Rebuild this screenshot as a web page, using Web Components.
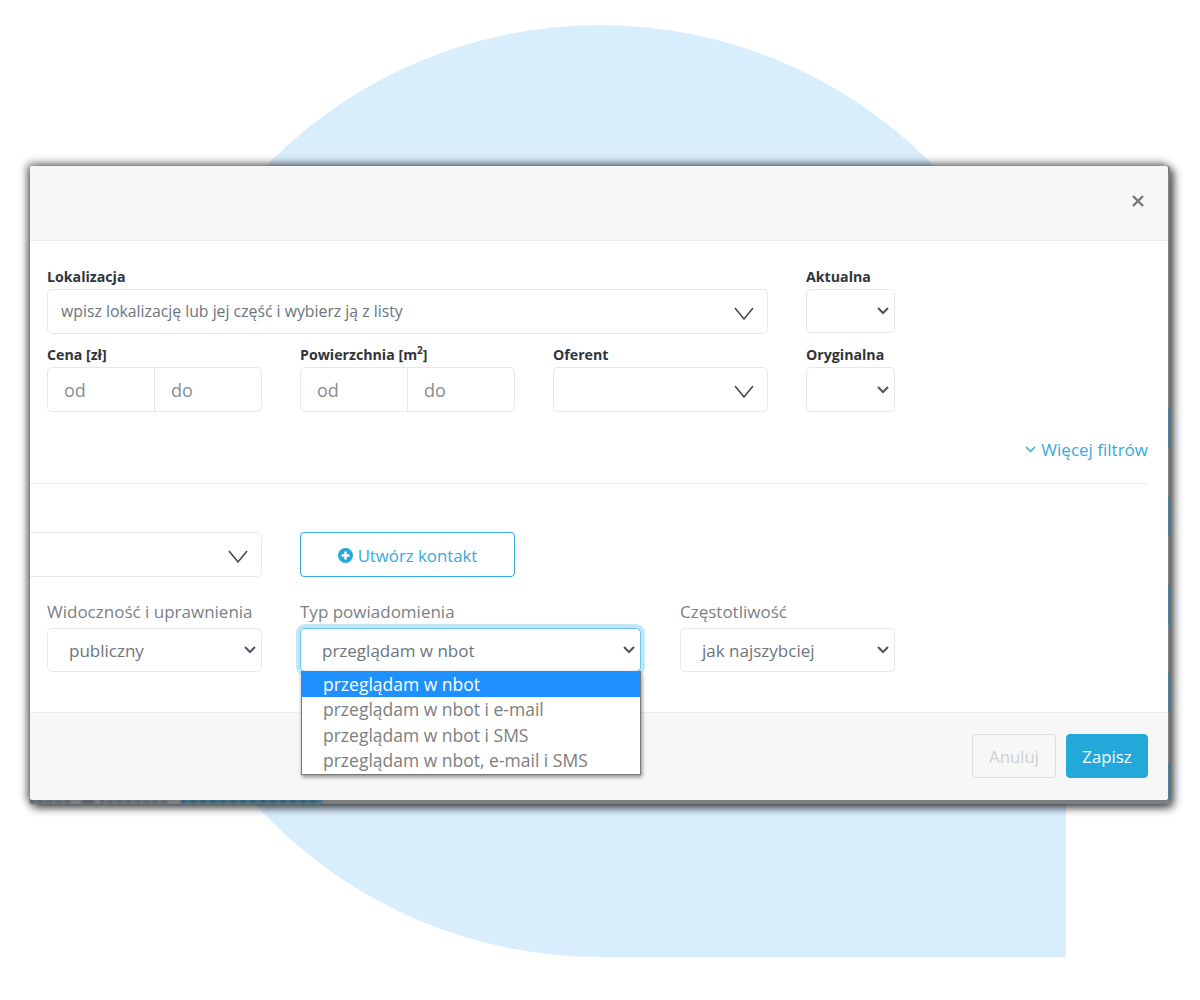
<!DOCTYPE html>
<html lang="pl">
<head>
<meta charset="utf-8">
<title>Filtry</title>
<style>
  body { margin: 0; background: #fff; font-family: "Open Sans", "Liberation Sans", sans-serif; }
</style>
</head>
<body>
<x-stage>
  <x-modal>
    <x-filter-grid>
      <x-field class="wide" label="Lokalizacja" strong>
        <x-select big value="wpisz lokalizację lub jej część i wybierz ją z listy" small-text></x-select>
      </x-field>
      <x-field label="Aktualna" strong><x-select short></x-select></x-field>
      <x-field label="Cena [zł]" strong><x-range></x-range></x-field>
      <x-field strong><span slot="label">Powierzchnia [m<sup style="font-size:10px;line-height:0">2</sup>]</span><x-range></x-range></x-field>
      <x-field label="Oferent" strong><x-select big></x-select></x-field>
      <x-field label="Oryginalna" strong><x-select></x-select></x-field>
    </x-filter-grid>
    <x-more-link>Więcej filtrów</x-more-link>
    <x-notify-form>
      <x-select big class="cut" slot="contact"></x-select>
      <x-add-button slot="contact">Utwórz kontakt</x-add-button>
      <x-field slot="visibility" label="Widoczność i uprawnienia"><x-select short value="publiczny"></x-select></x-field>
      <x-field slot="type" label="Typ powiadomienia">
        <x-select short focused value="przeglądam w nbot"></x-select>
        <x-option-menu>
          <span selected>przeglądam w nbot</span>
          <span>przeglądam w nbot i e-mail</span>
          <span>przeglądam w nbot i SMS</span>
          <span>przeglądam w nbot, e-mail i SMS</span>
        </x-option-menu>
      </x-field>
      <x-field slot="frequency" label="Częstotliwość"><x-select short value="jak najszybciej"></x-select></x-field>
    </x-notify-form>
    <x-action slot="footer" muted>Anuluj</x-action>
    <x-action slot="footer">Zapisz</x-action>
  </x-modal>
</x-stage>

<script type="text/javascript">
class XStage extends HTMLElement {
  constructor() {
    super();
    this.attachShadow({mode: 'open'}).innerHTML = `
      <style>
        :host { display: block; position: relative; width: 1200px; height: 1000px; box-sizing: border-box; padding: 166px 32px 0 30px; overflow: hidden; }
        .blob { position: absolute; left: 134px; top: 25px; width: 932px; height: 932px; background: #d9eefd; border-radius: 50% 50% 0 50%; }
        /* page behind the modal, only its edge shows */
        .behind { position: absolute; left: 30px; top: 166px; width: 1140px; height: 638px; border-radius: 3px; background: #7d8083; box-shadow: 4px 3px 10px rgba(0,0,0,.6), -3px -3px 9px rgba(0,0,0,.45), 0 4px 8px rgba(0,0,0,.3); }
        .edge { position: absolute; right: 0; top: 0; width: 2px; height: 634px; }
        .edge i { position: absolute; left: 0; width: 2px; background: #41809f; }
        .crumbs { position: absolute; top: 634px; height: 3px; filter: blur(.8px); }
        .crumbs.grey { background: repeating-linear-gradient(90deg, #565b60 0 4px, #74787c 4px 6px, #62666a 6px 9px); }
        .crumbs.blue { background: repeating-linear-gradient(90deg, #1a5673 0 5px, #3d6e88 5px 7px, #2c6a8a 7px 10px); }
        ::slotted(*) { position: relative; }
      </style>
      <div class="blob"></div>
      <div class="behind">
        <div class="edge">
          <i style="top:242px;height:39px"></i>
          <i style="top:331px;height:39px"></i>
          <i style="top:419px;height:40px"></i>
          <i style="top:507px;height:39px"></i>
          <i style="top:597px;height:37px"></i>
        </div>
        <div class="crumbs grey" style="left:0;width:40px"></div>
        <div class="crumbs grey" style="left:52px;width:12px;background:#4f5459"></div>
        <div class="crumbs grey" style="left:70px;width:68px"></div>
        <div class="crumbs blue" style="left:151px;width:141px"></div>
      </div>
      <slot></slot>`;
  }
}

class XModal extends HTMLElement {
  constructor() {
    super();
    this.attachShadow({mode: 'open'}).innerHTML = `
      <style>
        :host { display: flex; flex-direction: column; height: 634px; background: #fff; border-radius: 3px; color: #6c757d; }
        header { height: 75px; flex: none; box-sizing: border-box; background: #f7f7f7; border-bottom: 1px solid #e9ecef; display: flex; justify-content: flex-end; align-items: center; padding: 0 24px 4px 0; border-radius: 3px 3px 0 0; }
        svg { display: block; }
        main { flex: 1; padding: 26px 20px 0 17px; }
        footer { height: 88px; flex: none; box-sizing: border-box; background: #f7f7f7; border-top: 1px solid #e9ecef; display: flex; justify-content: flex-end; align-items: flex-start; gap: 10px; padding: 21px 20px 0 0; border-radius: 0 0 3px 3px; }
      </style>
      <header>
        <svg width="12" height="12" viewBox="0 0 12 12" fill="none" stroke="#777" stroke-width="2.4"><path d="M1 1l10 10M11 1L1 11"/></svg>
      </header>
      <main><slot></slot></main>
      <footer><slot name="footer"></slot></footer>`;
  }
}

class XFilterGrid extends HTMLElement {
  constructor() {
    super();
    this.attachShadow({mode: 'open'}).innerHTML = `
      <style>
        :host { display: grid; grid-template-columns: 215px 215px 215px 89px; column-gap: 38px; row-gap: 11px; }
        ::slotted(.wide) { grid-column: span 3; }
      </style>
      <slot></slot>`;
  }
}

class XField extends HTMLElement {
  constructor() {
    super();
    this.attachShadow({mode: 'open'}).innerHTML = `
      <style>
        :host { display: block; position: relative; }
        .label { display: block; color: #7b8085; font-size: 17px; line-height: 21px; margin-bottom: 6px; white-space: nowrap; }
        :host([strong]) .label { color: #2f353a; font-size: 14.200px; font-weight: 700; line-height: 19px; margin-bottom: 3px; }
      </style>
      <span class="label"><slot name="label"></slot></span>
      <slot></slot>`;
  }
  connectedCallback() {
    if (this.hasAttribute('label')) {
      this.shadowRoot.querySelector('slot[name=label]').textContent = this.getAttribute('label');
    }
  }
}

class XSelect extends HTMLElement {
  constructor() {
    super();
    this.attachShadow({mode: 'open'}).innerHTML = `
      <style>
        :host { display: flex; align-items: center; justify-content: space-between; box-sizing: border-box; height: 45px; background: #fff; border: 1px solid #e6e9ec; border-radius: 5px; padding: 0 5px 0 21px; color: #6c757d; font-size: 17px; }
        :host([short]) { height: 44px; }
        :host([big]) { padding: 0 13px 2px 13px; }
        :host([small-text]) { font-size: 15.800px; }
        :host([focused]) { border-color: #6cc6ea; box-shadow: 0 0 1px 4px #bfe6f7; margin-right: 1px; }
        :host(.cut) { margin-left: -17px; border-left: 0; border-radius: 0 5px 5px 0; }
        svg { display: block; flex: none; margin-left: auto; }
        svg.big { margin-top: 6px; }
      </style>
      <span class="value"></span>`;
  }
  connectedCallback() {
    this.shadowRoot.querySelector('.value').textContent = this.getAttribute('value') || '';
    const big = this.hasAttribute('big');
    const icon = big
      ? `<svg class="big" width="20" height="13" viewBox="0 0 20 13" fill="none" stroke="#444" stroke-width="1.5"><path d="M1 1l9 11 9-11"/></svg>`
      : `<svg width="12" height="8" viewBox="0 0 12 8" fill="none" stroke="#4a5560" stroke-width="2"><path d="M1 1l5 5 5-5"/></svg>`;
    this.shadowRoot.querySelector('.value').insertAdjacentHTML('afterend', icon);
  }
}

class XRange extends HTMLElement {
  constructor() {
    super();
    this.attachShadow({mode: 'open'}).innerHTML = `
      <style>
        :host { display: grid; grid-template-columns: 106px 1fr; height: 45px; box-sizing: border-box; border: 1px solid #e6e9ec; border-radius: 5px; color: #868e96; font-size: 18px; }
        span { display: flex; align-items: center; padding-left: 16px; }
        span + span { border-left: 1px solid #e6e9ec; }
      </style>
      <span>od</span><span>do</span>`;
  }
}

class XMoreLink extends HTMLElement {
  constructor() {
    super();
    this.attachShadow({mode: 'open'}).innerHTML = `
      <style>
        :host { display: flex; align-items: center; justify-content: flex-end; gap: 5px; height: 22px; margin-top: 26px; color: #36aadd; font-size: 17px; }
        svg { display: block; }
      </style>
      <svg width="11" height="7" viewBox="0 0 11 7" fill="none" stroke="#36aadd" stroke-width="1.5"><path d="M1 1l4.500 4.500L10 1"/></svg>
      <slot></slot>`;
  }
}

class XNotifyForm extends HTMLElement {
  constructor() {
    super();
    this.attachShadow({mode: 'open'}).innerHTML = `
      <style>
        :host { display: block; margin: 23px 0 0 -17px; padding: 48px 0 0 17px; border-top: 1px solid #e9ecef; }
        .contact { display: grid; grid-template-columns: 215px 215px; column-gap: 38px; }
        .opts { display: grid; grid-template-columns: 215px 342px 215px; column-gap: 38px; margin-top: 24px; }
      </style>
      <div class="contact"><slot name="contact"></slot></div>
      <div class="opts"><slot name="visibility"></slot><slot name="type"></slot><slot name="frequency"></slot></div>`;
  }
}

class XAddButton extends HTMLElement {
  constructor() {
    super();
    this.attachShadow({mode: 'open'}).innerHTML = `
      <style>
        :host { display: flex; align-items: center; justify-content: center; gap: 5px; box-sizing: border-box; height: 45px; padding-top: 1px; border: 1px solid #36aadd; border-radius: 4px; color: #36aadd; font-size: 16.800px; }
        svg { display: block; }
      </style>
      <svg width="15" height="15" viewBox="0 0 15 15"><circle cx="7.500" cy="7.500" r="7.500" fill="#22a9da"/><path d="M7.500 3.500v8M3.500 7.500h8" stroke="#fff" stroke-width="2.400"/></svg>
      <slot></slot>`;
  }
}

class XOptionMenu extends HTMLElement {
  constructor() {
    super();
    this.attachShadow({mode: 'open'}).innerHTML = `
      <style>
        :host { display: block; position: absolute; left: 1px; right: 1px; top: 70px; z-index: 2; background: #fff; border: 1px solid #7a7a7a; box-shadow: 1px 2px 4px rgba(0,0,0,.45); font-size: 17.500px; color: #7d7d7d; }
        ::slotted(span) { display: block; height: 25.400px; line-height: 25px; padding-left: 21px; white-space: nowrap; }
        ::slotted(span[selected]) { background: #1e90ff; color: #fff; }
      </style>
      <slot></slot>`;
  }
}

class XAction extends HTMLElement {
  constructor() {
    super();
    this.attachShadow({mode: 'open'}).innerHTML = `
      <style>
        :host { display: flex; align-items: center; justify-content: center; box-sizing: border-box; width: 82px; height: 44px; background: #22a9da; border: 1px solid #22a9da; border-radius: 4px; color: #fff; font-size: 16.800px; }
        :host([muted]) { width: 84px; background: transparent; border: 1px solid #dcdfe2; color: #ccd0d4; }
      </style>
      <slot></slot>`;
  }
}

customElements.define('x-stage', XStage);
customElements.define('x-modal', XModal);
customElements.define('x-filter-grid', XFilterGrid);
customElements.define('x-field', XField);
customElements.define('x-select', XSelect);
customElements.define('x-range', XRange);
customElements.define('x-more-link', XMoreLink);
customElements.define('x-notify-form', XNotifyForm);
customElements.define('x-add-button', XAddButton);
customElements.define('x-option-menu', XOptionMenu);
customElements.define('x-action', XAction);
</script>
</body>
</html>
